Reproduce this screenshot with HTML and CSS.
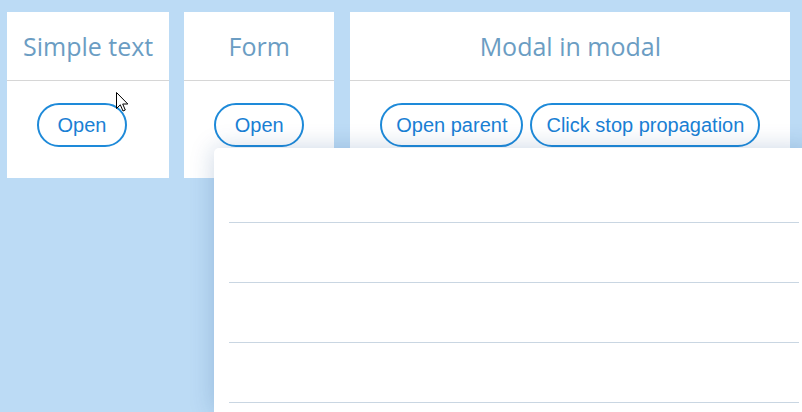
FILE: index.html
```html
<!DOCTYPE html>
<html lang="en">
<head>
    <meta charset="UTF-8">
    <meta name="viewport" content="width=device-width, initial-scale=1.0">
    <title>Modals</title>
    <link rel="stylesheet" href="styles.css">
</head>
<body>

    <div class="cards">
        <div class="card">
            <div class="card-title">Simple text</div>
            <div class="card-body">
                <button class="btn">Open</button>
            </div>
        </div>
        <div class="card">
            <div class="card-title">Form</div>
            <div class="card-body">
                <button class="btn">Open</button>
            </div>
        </div>
        <div class="card">
            <div class="card-title">Modal in modal</div>
            <div class="card-body">
                <button class="btn">Open parent</button>
                <button class="btn">Click stop propagation</button>
            </div>
        </div>
    </div>

    <div class="modal">
        <div class="modal-row"></div>
        <div class="modal-row"></div>
        <div class="modal-row"></div>
        <div class="modal-row"></div>
    </div>

    <svg class="cursor" width="13" height="20" viewBox="0 0 13 20">
        <path d="M0.5 0.5 L0.5 16.5 L4.3 12.8 L7 19 L9.3 18 L6.7 12 L11.8 12 Z" fill="#fff" stroke="#000" stroke-width="1" stroke-linejoin="round"/>
    </svg>

</body>
</html>
```

FILE: styles.css
```css
html {
    overflow: hidden;
}

body {
    margin: 0;
    padding: 12px 7px;
    background: #bcdbf5;
    font-family: "Liberation Sans", Arial, sans-serif;
    height: 412px;
    box-sizing: border-box;
    overflow: hidden;
    position: relative;
}

.cards {
    display: flex;
    align-items: flex-start;
    gap: 15px;
}

.card {
    background: #fff;
}

.card:last-child {
    margin-left: 1px;
}

.card-title {
    height: 68px;
    line-height: 68px;
    padding: 0 16px;
    text-align: center;
    font-family: "Open Sans", sans-serif;
    font-size: 25px;
    color: #6b9dc3;
    border-bottom: 1px solid #d6d6d6;
    white-space: nowrap;
}

.card-body {
    padding: 22px 30px 31px;
    display: flex;
    gap: 7px;
}

.btn {
    min-width: 90px;
    height: 44px;
    padding: 0 14px;
    border: 2px solid #1e8ad9;
    border-radius: 22px;
    background: #fff;
    color: #1a80d4;
    font-family: "Liberation Sans", Arial, sans-serif;
    font-size: 20px;
    white-space: nowrap;
    cursor: pointer;
}

.modal {
    position: absolute;
    left: 214px;
    top: 148px;
    bottom: 0;
    width: 600px;
    padding: 14px 15px 0;
    box-sizing: border-box;
    background: #fff;
    border-radius: 5px 0 0 0;
    box-shadow: 0 0 24px rgba(20, 70, 130, 0.22);
}

.modal-row {
    height: 59px;
    border-bottom: 1px solid #c9d6e2;
}

.modal-row:first-child {
    height: 60px;
}

.cursor {
    position: absolute;
    left: 116px;
    top: 92px;
}
```
